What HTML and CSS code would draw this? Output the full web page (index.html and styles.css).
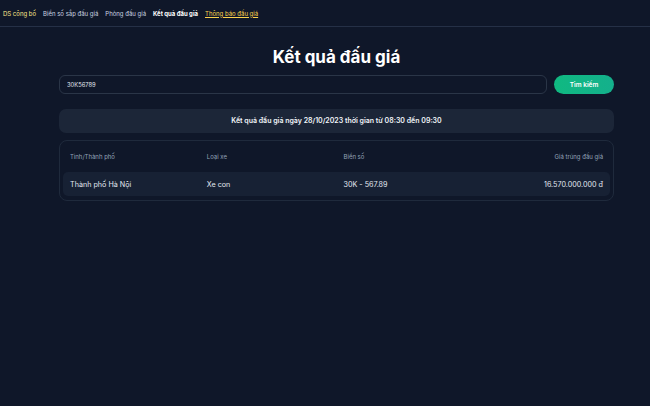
FILE: index.html
```html
<!DOCTYPE html>
<html>
<head>
  <title>Kết quả đấu giá</title>
  <link rel="stylesheet" href="styles.css">
</head>
<body>
  <nav class="topnav">
    <a class="nav-link highlight" href="#">DS công bố</a>
    <a class="nav-link" href="#">Biển số sắp đấu giá</a>
    <a class="nav-link" href="#">Phòng đấu giá</a>
    <a class="nav-link active" href="#">Kết quả đấu giá</a>
    <a class="nav-link notice" href="#">Thông báo đấu giá</a>
  </nav>

  <main class="content">
    <h1>Kết quả đấu giá</h1>

    <form class="search">
      <input class="search-input" type="text" value="30K56789">
      <button class="search-btn" type="button">Tìm kiếm</button>
    </form>

    <div class="banner">Kết quả đấu giá ngày 28/10/2023 thời gian từ 08:30 đến 09:30</div>

    <div class="results">
      <div class="row head">
        <div>Tỉnh/Thành phố</div>
        <div>Loại xe</div>
        <div>Biển số</div>
        <div class="right">Giá trúng đấu giá</div>
      </div>
      <div class="row item">
        <div>Thành phố Hà Nội</div>
        <div>Xe con</div>
        <div>30K - 567.89</div>
        <div class="right">16.570.000.000 đ</div>
      </div>
    </div>
  </main>
</body>
</html>
```

FILE: styles.css
```css
body {
  font-family: Inter, "Noto Sans", sans-serif;
  margin: 0;
  padding: 0;
  background-color: #0f1729;
  color: #e2e8f0;
  min-height: 406px;
}

.topnav {
  display: flex;
  align-items: center;
  gap: 7px;
  height: 26px;
  padding: 0 3px;
  border-bottom: 1px solid #253046;
}

.nav-link {
  font-size: 6px;
  color: #cbd5e1;
  text-decoration: none;
}

.nav-link.highlight {
  color: #fde68a;
}

.nav-link.active {
  color: #fff;
  font-weight: 700;
}

.nav-link.notice {
  color: #fcd34d;
  text-decoration: underline;
}

.content {
  width: 555px;
  margin-left: 59px;
  padding-top: 20px;
}

h1 {
  text-align: center;
  margin: 0 0 8px;
  font-size: 17px;
  line-height: 20px;
  font-weight: 700;
  color: #fff;
}

.search {
  display: flex;
  gap: 7px;
  margin: 0;
}

.search-input {
  flex: 1;
  height: 19px;
  box-sizing: border-box;
  padding: 0 7px;
  background: transparent;
  border: 1px solid #2a3547;
  border-radius: 6px;
  font-family: inherit;
  font-size: 5.8px;
  color: #e2e8f0;
  outline: none;
}

.search-btn {
  width: 60px;
  height: 19px;
  border: none;
  border-radius: 10px;
  background: linear-gradient(90deg, #10b981, #14b08c);
  color: #fff;
  font-family: inherit;
  font-size: 6.5px;
  font-weight: 600;
  cursor: pointer;
}

.banner {
  margin-top: 15px;
  height: 24px;
  line-height: 24px;
  border-radius: 7px;
  background-color: #1c2638;
  text-align: center;
  font-size: 7px;
  font-weight: 600;
  color: #f1f5f9;
}

.results {
  margin-top: 7px;
  border: 1px solid #1f2a3c;
  border-radius: 8px;
  padding: 0 3px 4px;
}

.row {
  display: grid;
  grid-template-columns: repeat(4, 1fr);
  align-items: center;
}

.row > div {
  padding: 0 7px;
}

.row .right {
  text-align: right;
}

.row.head {
  height: 31px;
  font-size: 6px;
  color: #94a3b8;
}

.row.item {
  height: 24px;
  border-radius: 5px;
  background-color: #172134;
  font-size: 7.2px;
  color: #e2e8f0;
}
```
